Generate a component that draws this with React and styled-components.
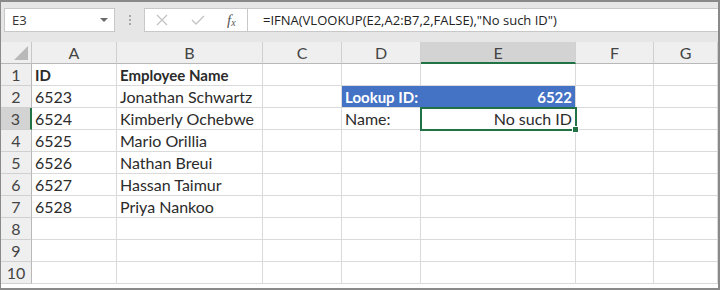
import styled, { createGlobalStyle } from "styled-components";

const GlobalStyle = createGlobalStyle`
  html, body {
    margin: 0;
    padding: 0;
    background: #ffffff;
  }
`;

const COLS = ["A", "B", "C", "D", "E", "F", "G"];
const COL_WIDTHS = "31px 85px 146px 79px 79px 155px 78px 1fr";

const rows = [
  { A: "ID", B: "Employee Name", bold: true },
  { A: "6523", B: "Jonathan Schwartz", D: "Lookup ID:", E: "6522", lookup: true },
  { A: "6524", B: "Kimberly Ochebwe", D: "Name:", E: "No such ID" },
  { A: "6525", B: "Mario Orillia" },
  { A: "6526", B: "Nathan Breui" },
  { A: "6527", B: "Hassan Taimur" },
  { A: "6528", B: "Priya Nankoo" },
  {},
  {},
  {},
];

const App = () => {
  return (
    <>
      <GlobalStyle />
      <Frame>
        <FormulaBar>
          <NameBox>
            <span>E3</span>
            <DropArrow />
          </NameBox>
          <Grip>
            <i />
            <i />
            <i />
          </Grip>
          <FormulaBox>
            <Tools>
              <svg width="14" height="14" viewBox="0 0 14 14">
                <path d="M2 2 L12 12 M12 2 L2 12" stroke="#c4c4c4" strokeWidth="1.3" fill="none" />
              </svg>
              <svg width="16" height="14" viewBox="0 0 16 14">
                <path d="M2 7 L6 11 L14 3" stroke="#c4c4c4" strokeWidth="1.4" fill="none" />
              </svg>
              <Fx>
                f<sub>x</sub>
              </Fx>
            </Tools>
            <FormulaText>=IFNA(VLOOKUP(E2,A2:B7,2,FALSE),"No such ID")</FormulaText>
          </FormulaBox>
        </FormulaBar>
        <Sheet>
          <Corner />
          {COLS.map((c) => (
            <ColHead key={c} active={c === "E"}>
              {c}
            </ColHead>
          ))}
          {rows.map((r, i) => (
            <Row key={i} r={r} n={i + 1} />
          ))}
        </Sheet>
      </Frame>
    </>
  );
};

const Row = ({ r, n }) => (
  <>
    <RowHead active={n === 3}>{n}</RowHead>
    {COLS.map((c) => {
      const blue = r.lookup && (c === "D" || c === "E");
      const selected = n === 3 && c === "E";
      return (
        <Cell
          key={c}
          bold={r.bold || blue}
          blue={blue}
          right={c === "E"}
          joinRight={blue && c === "D"}
          selected={selected}
        >
          {r[c] || ""}
        </Cell>
      );
    })}
  </>
);

const Frame = styled.div`
  width: 720px;
  height: 290px;
  box-sizing: border-box;
  border: 2px solid #8a8a8a;
  border-left-width: 1px;
  background: #ffffff;
  overflow: hidden;
  display: flex;
  flex-direction: column;
  font-family: Lato, "Open Sans", sans-serif;
`;

const FormulaBar = styled.div`
  height: 40px;
  flex: none;
  background: #e6e6e6;
  display: flex;
  align-items: flex-start;
  padding: 6px 0 0 3px;
  box-sizing: border-box;
`;

const NameBox = styled.div`
  width: 111px;
  height: 24px;
  box-sizing: border-box;
  background: #ffffff;
  border: 1px solid #c8c8c8;
  display: flex;
  align-items: center;
  justify-content: space-between;
  padding: 0 6px 0 7px;
  font-family: "Open Sans", sans-serif;
  font-size: 13px;
  color: #333;
`;

const DropArrow = styled.span`
  width: 0;
  height: 0;
  border-left: 4px solid transparent;
  border-right: 4px solid transparent;
  border-top: 4px solid #6a6a6a;
`;

const Grip = styled.div`
  width: 29px;
  height: 24px;
  display: flex;
  flex-direction: column;
  align-items: center;
  justify-content: center;
  gap: 2px;
  i {
    width: 2px;
    height: 2px;
    background: #a8a8a8;
    display: block;
  }
`;

const FormulaBox = styled.div`
  flex: 1;
  height: 24px;
  box-sizing: border-box;
  background: #ffffff;
  border: 1px solid #c8c8c8;
  border-right: none;
  display: flex;
  align-items: center;
`;

const Tools = styled.div`
  width: 103px;
  height: 100%;
  box-sizing: border-box;
  border-right: 1px solid #c8c8c8;
  display: flex;
  align-items: center;
  gap: 21px;
  padding: 0 0 0 10px;
`;

const Fx = styled.span`
  font-family: "Liberation Serif", serif;
  font-style: italic;
  font-size: 15px;
  color: #555;
  sub {
    font-size: 10px;
    vertical-align: -1px;
  }
`;

const FormulaText = styled.div`
  padding-left: 15px;
  font-family: "Open Sans", sans-serif;
  font-size: 13px;
  color: #222;
  white-space: nowrap;
`;

const Sheet = styled.div`
  flex: 1;
  display: grid;
  grid-template-columns: ${COL_WIDTHS};
  grid-template-rows: repeat(11, 22px);
  align-content: start;
`;

const Corner = styled.div`
  background: #efefef;
  border-right: 1px solid #c8c8c8;
  border-bottom: 1px solid #b8b8b8;
  position: relative;
  &::after {
    content: "";
    position: absolute;
    right: 3px;
    bottom: 3px;
    border-left: 14px solid transparent;
    border-bottom: 14px solid #b9b9b9;
  }
`;

const ColHead = styled.div`
  background: ${(p) => (p.active ? "#d3d3d3" : "#efefef")};
  border-right: 1px solid #d0d0d0;
  border-bottom: ${(p) => (p.active ? "2px solid #217346" : "1px solid #b8b8b8")};
  display: flex;
  align-items: center;
  justify-content: center;
  font-size: 16px;
  color: #444;
`;

const RowHead = styled.div`
  background: ${(p) => (p.active ? "#d3d3d3" : "#efefef")};
  border-right: ${(p) => (p.active ? "2px solid #217346" : "1px solid #b8b8b8")};
  border-bottom: 1px solid #d0d0d0;
  display: flex;
  align-items: center;
  justify-content: center;
  font-size: 16px;
  color: #444;
`;

const Cell = styled.div`
  position: relative;
  box-sizing: border-box;
  border-right: 1px solid ${(p) => (p.joinRight ? "#4472c4" : "#dadada")};
  border-bottom: 1px solid #dadada;
  background: ${(p) => (p.blue ? "#4472c4" : "#ffffff")};
  color: ${(p) => (p.blue ? "#ffffff" : "#2b2b2b")};
  font-weight: ${(p) => (p.bold ? 700 : 400)};
  font-size: ${(p) => (p.bold ? "15px" : "16px")};
  display: flex;
  align-items: center;
  justify-content: ${(p) => (p.right ? "flex-end" : "flex-start")};
  padding: 0 3px;
  white-space: nowrap;
  outline: ${(p) => (p.selected ? "2px solid #217346" : "none")};
  outline-offset: -1px;
  z-index: ${(p) => (p.selected ? 1 : 0)};
  &::after {
    content: "";
    display: ${(p) => (p.selected ? "block" : "none")};
    position: absolute;
    right: -4px;
    bottom: -4px;
    width: 5px;
    height: 5px;
    background: #217346;
    border: 1px solid #ffffff;
  }
`;

export default App;
